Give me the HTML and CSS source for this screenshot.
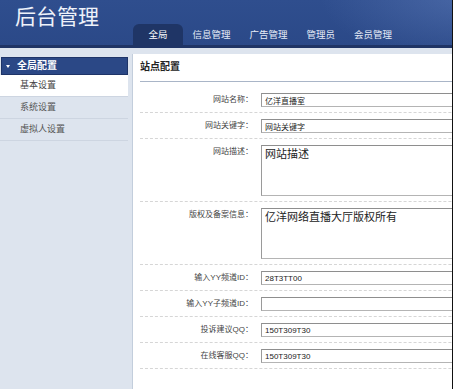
FILE: index.html
```html
<!DOCTYPE html>
<html lang="zh-CN">
<head>
<meta charset="utf-8">
<title>后台管理</title>
<link rel="stylesheet" href="styles.css">
</head>
<body>
<div class="page">
  <header class="top">
    <h1 class="logo">后台管理</h1>
    <nav class="nav">
      <a class="tab active">全局</a>
      <a class="tab">信息管理</a>
      <a class="tab">广告管理</a>
      <a class="tab">管理员</a>
      <a class="tab">会员管理</a>
    </nav>
  </header>
  <div class="bar"></div>
  <div class="main">
    <aside class="side">
      <div class="side-head"><span class="caret"></span>全局配置</div>
      <ul class="side-list">
        <li class="on">基本设置</li>
        <li>系统设置</li>
        <li>虚拟人设置</li>
      </ul>
    </aside>
    <section class="panel">
      <h2 class="panel-title">站点配置</h2>
      <div class="form">
        <div class="row"><label class="lbl">网站名称：</label><div class="field"><input class="inp" type="text" value="亿洋直播室"></div></div>
        <div class="row"><label class="lbl">网站关键字：</label><div class="field"><input class="inp" type="text" value="网站关键字"></div></div>
        <div class="row"><label class="lbl">网站描述：</label><div class="field"><textarea class="ta">网站描述</textarea></div></div>
        <div class="row"><label class="lbl">版权及备案信息：</label><div class="field"><textarea class="ta">亿洋网络直播大厅版权所有</textarea></div></div>
        <div class="row"><label class="lbl">输入YY频道ID：</label><div class="field"><input class="inp" type="text" value="28T3TT00"></div></div>
        <div class="row"><label class="lbl">输入YY子频道ID：</label><div class="field"><input class="inp" type="text" value=""></div></div>
        <div class="row"><label class="lbl">投诉建议QQ：</label><div class="field"><input class="inp" type="text" value="150T309T30"></div></div>
        <div class="row"><label class="lbl">在线客服QQ：</label><div class="field"><input class="inp" type="text" value="150T309T30"></div></div>
      </div>
    </section>
  </div>
</div>
</body>
</html>
```
FILE: styles.css
```css
html, body {
  margin: 0;
  padding: 0;
}
body {
  font-family: "Liberation Sans", "Noto Sans CJK SC", sans-serif;
  background: #ffffff;
}
.page {
  width: 453px;
  height: 389px;
  box-sizing: border-box;
  border-right: 1px solid #111;
  overflow: hidden;
  display: flex;
  flex-direction: column;
}
.top {
  height: 45px;
  flex: none;
  display: flex;
  align-items: flex-end;
  background:
    radial-gradient(ellipse 150px 70px at 470px -5px, rgba(120,150,210,0.35), rgba(120,150,210,0) 100%),
    linear-gradient(#2f4e8e, #2b4988);
}
.logo {
  align-self: flex-start;
  margin: 5px 0 0 0;
  width: 133px;
  padding-left: 15px;
  box-sizing: border-box;
  font-size: 21px;
  line-height: 24px;
  font-weight: normal;
  color: #eef2fa;
  letter-spacing: 0;
}
.nav {
  display: flex;
  align-items: flex-end;
}
.tab {
  display: block;
  height: 21px;
  line-height: 21px;
  padding: 0 9.5px;
  font-size: 9.5px;
  color: #e6ecf7;
}
.tab.active {
  width: 50px;
  padding: 0;
  text-align: center;
  background: #1f3566;
  border-radius: 6px 6px 0 0;
  color: #ffffff;
}
.bar {
  height: 3px;
  flex: none;
  background: #1f3465;
}
.main {
  flex: 1;
  display: flex;
  background: #dde4ee;
  padding-top: 6px;
}
.side {
  width: 128px;
  flex: none;
  margin-right: 4px;
}
.side-head {
  margin: 3px 0 0 1px;
  height: 18px;
  line-height: 18px;
  box-sizing: border-box;
  background: #2b4886;
  border: 1px solid #1e3468;
  color: #ffffff;
  font-size: 10px;
  font-weight: bold;
  display: flex;
  align-items: center;
}
.caret {
  width: 0;
  height: 0;
  border-left: 2.5px solid transparent;
  border-right: 2.5px solid transparent;
  border-top: 3px solid #ffffff;
  margin: 0 7px 0 4px;
}
.side-list {
  list-style: none;
  margin: 0;
  padding: 0;
}
.side-list li {
  height: 21px;
  line-height: 21px;
  padding-left: 20px;
  font-size: 9px;
  color: #555;
  border-bottom: 1px solid #cdd5e1;
}
.side-list li.on {
  background: #ffffff;
  color: #444;
}
.panel {
  flex: 1;
  background: #ffffff;
  border-left: 1px solid #c3cedc;
}
.panel-title {
  margin: 0 0 0 7px;
  height: 27px;
  line-height: 26px;
  font-size: 10px;
  font-weight: bold;
  color: #222;
  border-bottom: 1px solid #a9b5c7;
}
.form {
  margin-left: 7px;
  padding-top: 5px;
}
.row {
  display: flex;
  align-items: flex-start;
  padding: 6px 0 5px;
  border-bottom: 1px dashed #d6d6d6;
}
.lbl {
  width: 113px;
  flex: none;
  text-align: right;
  font-size: 8px;
  line-height: 14px;
  color: #444;
}
.field {
  margin-left: 8px;
  display: flex;
}
.inp {
  width: 260px;
  height: 14px;
  box-sizing: border-box;
  margin: 0;
  padding: 0 3px;
  border: 1px solid #b4b4b4;
  border-top-color: #8e8e8e;
  border-left-color: #9a9a9a;
  font-family: "Liberation Sans", "Noto Sans CJK SC", sans-serif;
  font-size: 8px;
  color: #222;
  outline: none;
}
.ta {
  width: 260px;
  height: 51px;
  box-sizing: border-box;
  margin: 0;
  padding: 1px 3px;
  border: 1px solid #b4b4b4;
  border-top-color: #8e8e8e;
  border-left-color: #9a9a9a;
  font-family: "Liberation Sans", "Noto Sans CJK SC", sans-serif;
  font-size: 11px;
  line-height: 14px;
  color: #222;
  resize: none;
  outline: none;
  overflow: hidden;
}
```
